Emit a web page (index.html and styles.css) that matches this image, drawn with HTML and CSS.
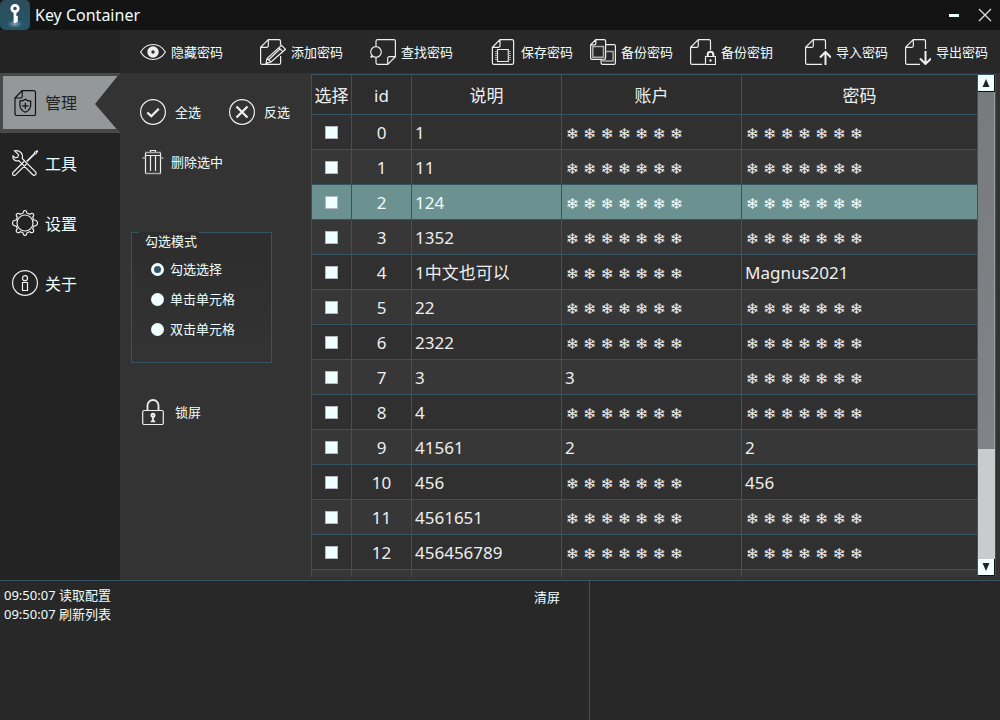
FILE: index.html
```html
<!DOCTYPE html>
<html lang="zh-CN">
<head>
<meta charset="utf-8">
<title>Key Container</title>
<link rel="stylesheet" href="styles.css">
</head>
<body>
<div class="window">
  <header class="titlebar">
    <svg class="app-icon" viewBox="0 0 30 30">
      <defs>
        <linearGradient id="tile" x1="0" y1="0" x2="0" y2="1"><stop offset="0" stop-color="#2c4d5b"/><stop offset="1" stop-color="#255568"/></linearGradient>
        <radialGradient id="glow"><stop offset="0" stop-color="#8fb0bd"/><stop offset="1" stop-color="#3d6f82" stop-opacity=".2"/></radialGradient>
      </defs>
      <rect width="30" height="30" rx="5" fill="url(#tile)"/>
      <ellipse cx="15" cy="24" rx="8" ry="4" fill="url(#glow)"/>
      <circle cx="15" cy="8.500" r="3.200" fill="none" stroke="#fff" stroke-width="2.800"/>
      <path d="M15 12v11M15 17.500h2.800M15 20.500h2.800" stroke="#fff" stroke-width="2.800"/>
    </svg>
    <h1 class="app-title">Key Container</h1>
    <button class="win-btn" aria-label="最小化"><svg viewBox="0 0 16 16"><path d="M3 8.500h10" stroke="#f0ffff" stroke-width="3"/></svg></button>
    <button class="win-btn" aria-label="关闭"><svg viewBox="0 0 16 16"><path d="M2 2l12 12M14 2L2 14" stroke="#ddd" stroke-width="1.300"/></svg></button>
  </header>

  <nav class="sidebar">
    <div class="nav-slot nav-slot-active">
      <button class="nav-item nav-item-active">
        <svg class="icon" viewBox="0 0 26 26"><path d="M10 .7h11.500a2 2 0 0 1 2 2v21a2 2 0 0 1-2 2H5a2 2 0 0 1-2-2V8zM10.200.7v5.800a1.500 1.500 0 0 1-1.500 1.500H3M13.300 9.200c1.700 1.400 3.400 1.800 5.400 1.900v4c0 3.300-2 5.700-5.400 7.200-3.400-1.500-5.400-3.900-5.400-7.200v-4c2-.1 3.700-.5 5.400-1.900zM13.300 12.700v6.400M10.100 15.900h6.400"/></svg>
        <span>管理</span>
      </button>
    </div>
    <div class="nav-slot"><button class="nav-item">
      <svg class="icon" viewBox="0 0 26 26"><path d="M2.500.8l4 3.800-.8 2.700-2.600.6-2-2C.2 8.600 2.800 12 6.800 10.600L20.500 24.500c1 1 2.200 1 3 .2s.8-2-.2-3L10.200 8.500C11.600 4 8-.4 2.500.8zM12 11.500L1 22.500c-.7.800-.6 1.700 0 2.400s1.700.7 2.500 0L14.500 14M15 11l7-7 .6-1.700L25.200.8l.3.400-1.500 2.500-1.600.6-7 7z"/></svg>
      <span>工具</span></button></div>
    <div class="nav-slot"><button class="nav-item">
      <svg class="icon" viewBox="0 0 26 26"><circle cx="13" cy="13" r="8"/><path d="M11 3.200C11.200 1 12 .5 13 .5s1.800.5 2 2.700l2.800 1.100c1.700-1.400 2.700-1.200 3.400-.5s.9 1.700-.5 3.400l1.100 2.800c2.200.2 3.700 1 3.700 3s-1.500 2.800-3.700 3l-1.100 2.800c1.400 1.700 1.200 2.700.5 3.400s-1.700.9-3.400-.5L15 22.800c-.2 2.200-1 2.700-2 2.700s-1.800-.5-2-2.700l-2.800-1.100c-1.700 1.400-2.700 1.200-3.400.5s-.9-1.700.5-3.400L4.200 16C2 15.800.5 15 .5 13s1.500-2.800 3.700-3l1.100-2.800C3.900 5.500 4.100 4.500 4.800 3.800s1.700-.9 3.400.5z"/></svg>
      <span>设置</span></button></div>
    <div class="nav-slot"><button class="nav-item">
      <svg class="icon" viewBox="0 0 26 26"><circle cx="13" cy="13" r="12.400"/><circle cx="13" cy="8.200" r="2.500"/><path d="M10.500 12.500h5v8h-5z"/></svg>
      <span>关于</span></button></div>
  </nav>

  <div class="toolbar">
    <button class="tool"><svg class="icon" viewBox="0 0 26 26"><path d="M.6 13C3.500 8.200 8 5.500 13 5.500s9.500 2.700 12.400 7.500c-2.900 4.800-7.400 7.500-12.400 7.500S3.500 17.800.6 13z"/><circle cx="13" cy="13" r="3.700" stroke-width="4"/></svg><span>隐藏密码</span></button>
    <div class="tool-group tool-group-wide">
      <button class="tool"><svg class="icon" viewBox="0 0 26 26"><path d="M20.500 6V2.200A1.600 1.600 0 0 0 19 .6H8.300L.6 8.300v15.500a1.600 1.600 0 0 0 1.600 1.600H19a1.600 1.600 0 0 0 1.600-1.600V17M8.300.6v6a1.600 1.600 0 0 1-1.600 1.700H.6M21.500 6.300l4 4L11 23l-5 1.500 1-5zM7 19.500l4 3.500M18.800 8.800l4 3.800M20.500 9.500L9 20.500M6 24.500l2-1"/></svg><span>添加密码</span></button>
      <button class="tool"><svg class="icon" viewBox="0 0 26 26"><path d="M6 7V2.200A1.600 1.600 0 0 1 7.600.6h16.200a1.600 1.600 0 0 1 1.600 1.600v15.500l-7.700 7.700H7.600A1.600 1.600 0 0 1 6 23.800V19M17.700 25.400v-6a1.600 1.600 0 0 1 1.600-1.700h6.100"/><circle cx="6" cy="13" r="5.300"/><path d="M2.300 16.800L.8 18.500" stroke-width="2"/></svg><span>查找密码</span></button>
    </div>
    <div class="tool-group">
      <button class="tool"><svg class="icon" viewBox="0 0 26 26"><path d="M10 .6h12a1.600 1.600 0 0 1 1.600 1.600v21.600a1.600 1.600 0 0 1-1.600 1.600H4a1.600 1.600 0 0 1-1.600-1.600V8.300zM10 .6v6a1.600 1.600 0 0 1-1.600 1.700h-6M7.500 10.500h10.800v12H7.500z"/><path class="dim" d="M5 12.500h2.500M5 14.500h2.500M5 16.500h2.500M5 18.500h2.500M5 20.500h2.500M18.300 12.500h2.500M18.300 14.500h2.500M18.300 16.500h2.500M18.300 18.500h2.500M18.300 20.500h2.500"/></svg><span>保存密码</span></button>
      <button class="tool"><svg class="icon" viewBox="0 0 26 26"><path d="M5.800.6h8.400a1.400 1.400 0 0 1 1.400 1.400v17a1.400 1.400 0 0 1-1.400 1.400H2A1.400 1.400 0 0 1 .6 19V5.800zM5.800.6v3.800a1.400 1.400 0 0 1-1.400 1.400H.6M15.600 5.600H24A1.400 1.400 0 0 1 25.400 7v17a1.400 1.400 0 0 1-1.400 1.400H12.500a1.400 1.400 0 0 1-1.400-1.400v-3.600"/><path class="dim" d="M2.800 7.500h10.700v10.700H2.800zM15.600 12.500h7.500V22H13v-2" stroke-width="1.500"/></svg><span>备份密码</span></button>
      <button class="tool"><svg class="icon" viewBox="0 0 26 26"><path d="M20.500 11V2.200A1.600 1.600 0 0 0 19 .6H8.300L.6 8.300v15.500a1.600 1.600 0 0 0 1.600 1.600h12.500M8.300.6v6a1.600 1.600 0 0 1-1.600 1.700H.6M15.500 17.500h10v8h-10z"/><path d="M17.700 17.500v-2a2.800 2.800 0 0 1 5.600 0v2" stroke-width="2"/><circle cx="20.500" cy="21.500" r=".6"/></svg><span>备份密钥</span></button>
    </div>
    <div class="tool-group tool-group-end">
      <button class="tool"><svg class="icon" viewBox="0 0 26 26"><path d="M20.500 10V2.200A1.600 1.600 0 0 0 19 .6H8.300L.6 8.300v15.500a1.600 1.600 0 0 0 1.600 1.600H17M8.300.6v6a1.600 1.600 0 0 1-1.600 1.700H.6"/><path d="M20.500 26V13M15 18.500l5.500-5.500 5.500 5.500" stroke-width="2"/></svg><span>导入密码</span></button>
      <button class="tool"><svg class="icon" viewBox="0 0 26 26"><path d="M20.500 10V2.200A1.600 1.600 0 0 0 19 .6H8.300L.6 8.300v15.500a1.600 1.600 0 0 0 1.600 1.600H15M8.300.6v6a1.600 1.600 0 0 1-1.600 1.700H.6"/><path d="M20.500 12v13M15 19.500l5.500 5.500 5.500-5.500" stroke-width="2"/></svg><span>导出密码</span></button>
    </div>
  </div>

  <main class="content">
    <aside class="actions">
      <div class="action-row">
        <button class="action"><svg class="icon" viewBox="0 0 26 26"><circle cx="13" cy="13" r="12.400"/><path d="M7.300 13.500l4 3.700 7.500-7.500" stroke-width="2.300"/></svg><span>全选</span></button>
        <button class="action"><svg class="icon" viewBox="0 0 26 26"><circle cx="13" cy="13" r="12.400"/><path d="M7.500 7.500l11 11M18.500 7.500l-11 11" stroke-width="2.300"/></svg><span>反选</span></button>
      </div>
      <button class="action action-delete"><svg class="icon" viewBox="0 0 26 26"><path d="M5.500 4v20M20.500 4v20M5.500 6.500h15M10.500 3V1.500h5V3M10.500 7v15M15.500 7v15"/><path class="dim" d="M5 3.500h16M2.500 9h3M20.500 9h3M5 24.500h16" stroke-width="1.500"/></svg><span>删除选中</span></button>
      <fieldset class="mode">
        <legend class="mode-title">勾选模式</legend>
        <label class="mode-option"><input class="radio" type="radio" name="mode" checked>勾选选择</label>
        <label class="mode-option"><input class="radio" type="radio" name="mode">单击单元格</label>
        <label class="mode-option"><input class="radio" type="radio" name="mode">双击单元格</label>
      </fieldset>
      <button class="action"><svg class="icon" viewBox="0 0 26 26"><path d="M7.500 11V6.500a5.500 5.500 0 0 1 11 0V11" stroke-width="1.800"/><rect x="2.700" y="11.500" width="20.600" height="14" rx="1.500"/><circle cx="13" cy="16.300" r="1.500" stroke-width="2"/><path d="M13 17v5M10.800 22.300h4.400" stroke-width="1.800"/></svg><span>锁屏</span></button>
    </aside>

    <section class="grid-view">
      <div class="grid-body">
        <table class="grid">
          <colgroup><col class="col-check"><col class="col-id"><col class="col-note"><col class="col-account"><col></colgroup>
          <thead><tr><th>选择</th><th>id</th><th>说明</th><th>账户</th><th>密码</th></tr></thead>
          <tbody id="rows"></tbody>
        </table>
      </div>
      <div class="scroll">
        <button class="scroll-btn" aria-label="向上滚动"><svg viewBox="0 0 16 16"><path d="M8 4l3.500 8h-7z"/></svg></button>
        <div class="scroll-thumb"></div>
        <div class="scroll-track"></div>
        <button class="scroll-btn" aria-label="向下滚动"><svg viewBox="0 0 16 16"><path d="M8 12l3.500-8h-7z"/></svg></button>
      </div>
    </section>
  </main>

  <footer class="log">
    <div class="log-main">
      <div class="log-lines"><p>09:50:07 读取配置</p><p>09:50:07 刷新列表</p></div>
      <button class="log-clear">清屏</button>
    </div>
    <div class="log-side"></div>
  </footer>
</div>
<script src="rows.js"></script>
</body>
</html>
```

FILE: styles.css
```css
* { box-sizing: border-box; }

body {
  margin: 0;
  background: #282828;
  color: #f0ffff;
  font: 13px/19px "Noto Sans", "Noto Sans CJK SC", sans-serif;
}

button {
  padding: 0;
  border: 0;
  background: none;
  color: inherit;
  font: inherit;
  text-align: left;
  white-space: nowrap;
}

.window {
  display: grid;
  grid-template: 30px 43px minmax(0, 1fr) 140px / 120px minmax(0, 1fr);
  height: 100vh;
}

.icon {
  flex: none;
  width: 26px;
  height: 26px;
  fill: none;
  stroke: #eee;
  stroke-width: 1.2;
}

.dim { stroke: #aaa; }

.titlebar {
  grid-column: 1 / 3;
  display: flex;
  align-items: center;
  padding-right: 7px;
  background: #141414;
}

.app-icon { width: 30px; height: 30px; }

.app-title {
  flex: 1;
  margin: 0 0 0 5px;
  font-size: 16px;
  font-weight: 400;
}

.win-btn { width: 16px; height: 16px; margin-left: 15px; }
.win-btn svg { display: block; fill: none; }

.sidebar {
  grid-row: 2 / 4;
  grid-column: 1;
  padding-top: 43px;
  background: #232323;
}

.nav-slot { height: 60px; }
.nav-slot-active { background: #333; }

.nav-item {
  display: flex;
  align-items: center;
  gap: 7px;
  width: 100%;
  height: 100%;
  padding-left: 12px;
  font-size: 16px;
}
.nav-item span { padding-top: 2px; }

.nav-item-active {
  padding-left: 9px;
  border: solid #484848;
  border-width: 3px 0 4px 3px;
  background: #949899;
  color: #222;
  clip-path: polygon(0 0, 100% 0, 95px 31px, 100% 100%, 0 100%);
}
.nav-item-active .icon { stroke: #111; }

.toolbar {
  display: flex;
  align-items: center;
  padding: 1px 5px 0 20px;
  background: #282828;
}

.tool-group { display: flex; gap: 10px; margin-left: 30px; }
.tool-group-wide { gap: 20px; }
.tool-group-end { margin-left: auto; }

.tool {
  display: flex;
  flex: none;
  align-items: center;
  gap: 5px;
  width: 90px;
}

.content {
  display: flex;
  min-height: 0;
  padding: 1px 4px 3px 0;
  background: #333;
}

.actions {
  display: flex;
  flex-direction: column;
  align-items: flex-start;
  width: 191px;
  padding: 25px 20px 0;
}

.action-row { display: flex; gap: 28px; }
.action { display: flex; align-items: center; gap: 9px; }
.action-delete { gap: 5px; margin-top: 24px; }

.mode {
  width: 141px;
  height: 131px;
  margin: 57px 0 36px -9px;
  padding: 0 0 0 7px;
  border: 1px solid #375465;
  background: linear-gradient(#2d2d2d, #333);
}

.mode-title {
  float: left;
  width: 60px;
  margin: -1px 60px 3px 0;
  padding: 0 0 0 6px;
  background: #2d2d2d;
}

.mode-option {
  display: flex;
  clear: both;
  align-items: center;
  gap: 6px;
  height: 30px;
  padding-left: 12px;
}

.radio {
  appearance: none;
  width: 13px;
  height: 13px;
  margin: 0;
  border-radius: 50%;
  background: #f0ffff;
}
.radio:checked { border: 3px solid #f0ffff; background: #375465; }

.grid-view {
  display: flex;
  flex: 1;
  min-width: 0;
  border: 1px solid #375465;
  border-bottom: 0;
}

.grid-body { flex: 1; min-width: 0; overflow: hidden; }

.grid {
  width: 100%;
  border-spacing: 0;
  table-layout: fixed;
  color: #eee;
  font-size: 17px;
  line-height: 24px;
}

.col-check { width: 40px; }
.col-id { width: 60px; }
.col-note { width: 150px; }
.col-account { width: 180px; }

.grid th,
.grid td {
  height: 35px;
  padding: 2px 3px 0;
  border: solid #375465;
  border-width: 0 1px 1px 0;
  white-space: nowrap;
}
.grid th { height: 40px; padding: 2px 0 0; background: #2d2d2d; font-weight: 400; }
.grid td:nth-child(-n+2) { text-align: center; }
.grid td:first-child { padding: 0; }
.grid tbody tr { background: #303030; }
.grid tbody tr:nth-child(even) { background: #373737; }
.grid tbody .selected { background: #6b9190; color: #f0ffff; }

.masked { padding-left: 1px; font: 15px/24px "DejaVu Sans", sans-serif; }

.check {
  appearance: none;
  display: block;
  width: 13px;
  height: 13px;
  margin: 0 auto;
  border: 1px solid #b3b6c4;
  background: #f0ffff;
}

.scroll { display: flex; flex-direction: column; width: 17px; padding-bottom: 1px; }
.scroll-btn {
  flex: none;
  width: 17px;
  height: 17px;
  border: solid #111;
  border-width: 0 1px 1px 0;
  background: #f0ffff;
}
.scroll-btn svg { display: block; fill: #222; }
.scroll-thumb { flex: 357; background: linear-gradient(#777b7d, #828389); border-right: 1px solid #999ca0; }
.scroll-track { flex: 110; background: #c8cccc; }

.log {
  grid-column: 1 / 3;
  display: flex;
  border-top: 1px solid #375465;
  background: #282828;
}

.log-main {
  display: flex;
  width: 59%;
  align-items: flex-start;
  justify-content: space-between;
  padding: 5px 29px 0 4px;
  border-right: 1px solid #375465;
}
.log-side { flex: 1; }
.log-lines p { margin: 0; }
.log-clear { margin-top: 2px; }
```

FILE: rows.js
```js
const MASK = Array(7).fill("❄").join(" ");
const rows = [
  ["1"], ["11"], ["124"], ["1352"], ["1中文也可以", null, "Magnus2021"],
  ["22"], ["2322"], ["3", "3"], ["4"], ["41561", "2", "2"],
  ["456", null, "456"], ["4561651"], ["456456789"],
];

function cell(value) {
  return value ? `<td>${value}</td>` : `<td><span class="masked">${MASK}</span></td>`;
}

const body = rows.map(([note, account, password], id) => `
  <tr${id === 2 ? ' class="selected"' : ""}>
    <td><input class="check" type="checkbox" aria-label="选择 ${id}"></td>
    <td>${id}</td><td>${note}</td>${cell(account)}${cell(password)}
  </tr>`).join("");

document.getElementById("rows").innerHTML = body + `<tr>${"<td></td>".repeat(5)}</tr>`;
```
